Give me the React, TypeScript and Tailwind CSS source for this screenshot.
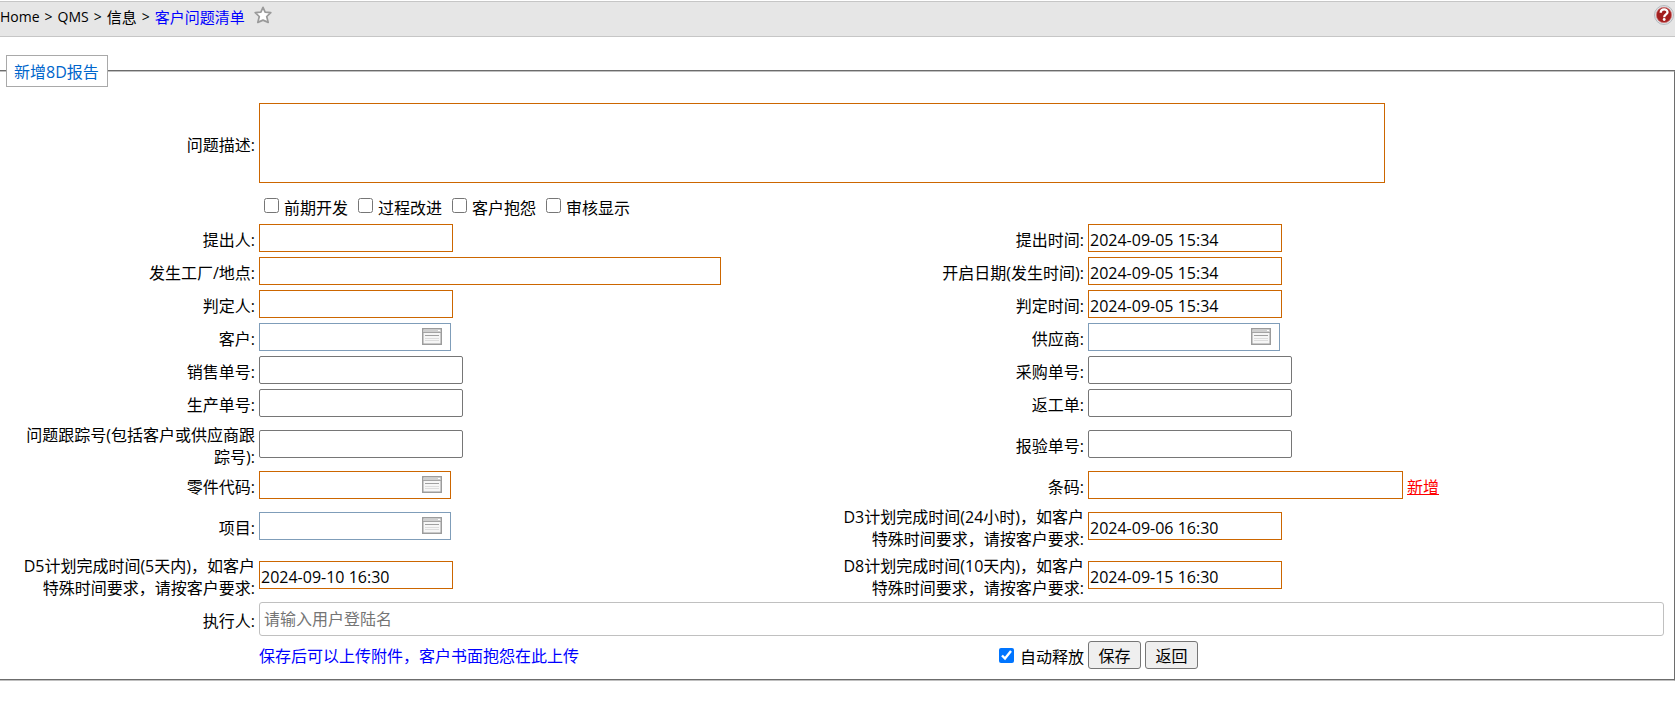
import { useState } from "react";
import type { ReactNode } from "react";
import clsx from "clsx";

type Variant = "required" | "lookup" | "requiredLookup" | "plain";

function Label({ htmlFor, children }: { htmlFor: string; children: ReactNode }) {
  return (
    <label htmlFor={htmlFor} className="-mb-0.5 self-center pt-0.5 text-right">
      {children}
    </label>
  );
}

function WindowIcon() {
  return (
    <svg width="20" height="17" viewBox="0 0 20 17" aria-hidden="true">
      <rect x="0.75" y="0.75" width="18.500" height="15.500" fill="#f6f6f6" stroke="#9c9c9c" strokeWidth="1.500" />
      <rect x="1.500" y="1.500" width="17" height="2.500" fill="#cfcfcf" />
      <path d="M1 4.500h18" stroke="#a4a4a4" />
      <path d="M3 7.500h14" stroke="#a0a0a0" />
      <path d="M3 10.500h14M3 12.500h14" stroke="#dcdcdc" />
      <path d="M16 2.500h2" stroke="#fff" />
    </svg>
  );
}

function TextField({
  id,
  variant = "plain",
  width,
  initial = "",
}: {
  id: string;
  variant?: Variant;
  width?: string;
  initial?: string;
}) {
  const [value, setValue] = useState(initial);
  const isLookup = variant === "lookup" || variant === "requiredLookup";

  return (
    <span className="relative flex items-center self-center">
      <input
        id={id}
        type="text"
        value={value}
        onChange={(e) => setValue(e.target.value)}
        className={clsx(
          "h-7 border bg-white px-px pt-1 outline-none",
          variant === "required" && "border-[#cc6600]",
          variant === "requiredLookup" && "border-[#cc6600]",
          variant === "lookup" && "border-[#7f9db9]",
          variant === "plain" && "rounded-[2px] border-[#767676]",
          width ?? (isLookup ? "w-48" : variant === "plain" ? "w-[204px]" : "w-[194px]")
        )}
      />
      {isLookup && (
        <button type="button" aria-label="选择" className="absolute top-[5px] left-[163px]">
          <WindowIcon />
        </button>
      )}
    </span>
  );
}

function Star() {
  return (
    <svg width="18" height="18" viewBox="0 0 18 18" aria-hidden="true">
      <path
        d="M9 1.300l2.100 4.900 5.700.4-4.100 3.900 1.500 5.900L9 14.100l-5.200 2.300 1.500-5.900L1.200 6.600l5.700-.4z"
        fill="#fff"
        stroke="#9a9a9a"
        strokeWidth="1.700"
        strokeLinejoin="round"
      />
    </svg>
  );
}

function HelpIcon() {
  return (
    <svg width="20" height="20" viewBox="0 0 20 20" aria-hidden="true">
      <circle cx="10" cy="10" r="9.500" fill="#dfe3e6" stroke="#b4b9be" />
      <circle cx="10" cy="10" r="7.700" fill="#a32020" stroke="#d88080" strokeWidth="0.600" />
      <path d="M6.700 7.800c0-4.400 6.800-4.300 6.800-.6 0 2.300-3.300 2.200-3.300 5" fill="none" stroke="#fff" strokeWidth="2.300" />
      <circle cx="10.200" cy="14.500" r="1.400" fill="#fff" />
    </svg>
  );
}

const categories = ["前期开发", "过程改进", "客户抱怨", "审核显示"];

export default function App() {
  const [autoRelease, setAutoRelease] = useState(true);

  return (
    <div className="min-h-screen bg-white font-['Open_Sans','Noto_Sans_CJK_SC',sans-serif] text-[16px] leading-[22px] text-black">
      <header className="mt-px flex h-9 items-start justify-between border-y border-[#c6c6c6] bg-[#e6e6e6]">
        <nav className="flex items-center gap-[5px] pt-1 text-[14px]">
          <a href="#home">Home</a>
          <span>&gt;</span>
          <a href="#qms">QMS</a>
          <span>&gt;</span>
          <a href="#info" className="text-[15px]">信息</a>
          <span>&gt;</span>
          <a href="#list" className="text-[15px] text-[#0000ff]">客户问题清单</a>
          <button type="button" aria-label="收藏" className="ml-1 self-start">
            <Star />
          </button>
        </nav>
        <button type="button" aria-label="帮助" className="pt-[3px] pr-px">
          <HelpIcon />
        </button>
      </header>

      <form onSubmit={(e) => e.preventDefault()} className="pt-[18px]">
        <fieldset className="border-y-2 border-r border-y-[#c0c0c0] border-r-[#6d6d6d] pb-2.5 [border-bottom-style:groove] [border-top-style:groove]">
          <legend className="ml-1.5 border border-[#a9a9a9] pt-[5px] pr-2 pb-[3px] pl-[7px] text-[#0066cc]">新增8D报告</legend>

          <div className="grid grid-cols-[242px_minmax(0,1fr)_245px_minmax(0,1fr)] gap-x-1 gap-y-[5px] pt-4 pr-2.5 pl-[13px]">
            <Label htmlFor="description">问题描述:</Label>
            <textarea
              id="description"
              className="col-span-3 block h-20 w-[1126px] max-w-full resize-none border border-[#cc6600] px-px outline-none"
            />

            <div className="col-span-3 col-start-2 flex h-[31px] items-center gap-2.5 pt-[3px] pl-[5px]">
              {categories.map((name) => (
                <label key={name} className="flex items-center gap-[5px]">
                  <input type="checkbox" className="size-[15px]" />
                  <span className="pt-1.5">{name}</span>
                </label>
              ))}
            </div>

            <Label htmlFor="raisedBy">提出人:</Label>
            <TextField id="raisedBy" variant="required" />
            <Label htmlFor="raisedAt">提出时间:</Label>
            <TextField id="raisedAt" variant="required" initial="2024-09-05 15:34" />

            <Label htmlFor="plant">发生工厂/地点:</Label>
            <TextField id="plant" variant="required" width="w-[462px]" />
            <Label htmlFor="openedAt">开启日期(发生时间):</Label>
            <TextField id="openedAt" variant="required" initial="2024-09-05 15:34" />

            <Label htmlFor="judgedBy">判定人:</Label>
            <TextField id="judgedBy" variant="required" />
            <Label htmlFor="judgedAt">判定时间:</Label>
            <TextField id="judgedAt" variant="required" initial="2024-09-05 15:34" />

            <Label htmlFor="customer">客户:</Label>
            <TextField id="customer" variant="lookup" />
            <Label htmlFor="supplier">供应商:</Label>
            <TextField id="supplier" variant="lookup" />

            <Label htmlFor="salesNo">销售单号:</Label>
            <TextField id="salesNo" />
            <Label htmlFor="purchaseNo">采购单号:</Label>
            <TextField id="purchaseNo" />

            <Label htmlFor="productionNo">生产单号:</Label>
            <TextField id="productionNo" />
            <Label htmlFor="reworkNo">返工单:</Label>
            <TextField id="reworkNo" />

            <Label htmlFor="trackingNo">问题跟踪号(包括客户或供应商跟踪号):</Label>
            <TextField id="trackingNo" />
            <Label htmlFor="inspectionNo">报验单号:</Label>
            <TextField id="inspectionNo" />

            <Label htmlFor="partCode">零件代码:</Label>
            <TextField id="partCode" variant="requiredLookup" />
            <Label htmlFor="barcode">条码:</Label>
            <div className="flex h-7 items-center gap-1">
              <TextField id="barcode" variant="required" width="w-[315px]" />
              <a href="#add" className="pt-1 text-[#ff0000] underline">新增</a>
            </div>

            <Label htmlFor="project">项目:</Label>
            <TextField id="project" variant="lookup" />
            <Label htmlFor="d3">D3计划完成时间(24小时)，如客户特殊时间要求，请按客户要求:</Label>
            <TextField id="d3" variant="required" initial="2024-09-06 16:30" />

            <Label htmlFor="d5">D5计划完成时间(5天内)，如客户特殊时间要求，请按客户要求:</Label>
            <TextField id="d5" variant="required" initial="2024-09-10 16:30" />
            <Label htmlFor="d8">D8计划完成时间(10天内)，如客户特殊时间要求，请按客户要求:</Label>
            <TextField id="d8" variant="required" initial="2024-09-15 16:30" />

            <Label htmlFor="executor">执行人:</Label>
            <input
              id="executor"
              type="text"
              placeholder="请输入用户登陆名"
              className="col-span-3 h-[34px] w-full rounded-[3px] border border-[#c0c0c0] px-1 outline-none placeholder:text-[#757575]"
            />

            <p className="col-start-2 self-center pt-0.5 text-[#0000ff]">保存后可以上传附件，客户书面抱怨在此上传</p>
            <label className="flex items-center justify-end gap-1.5">
              <input
                type="checkbox"
                checked={autoRelease}
                onChange={(e) => setAutoRelease(e.target.checked)}
                className="size-[15px]"
              />
              <span className="pt-1">自动释放</span>
            </label>
            <div className="flex items-center gap-1">
              <button type="submit" className="h-7 w-[53px] rounded-[3px] border border-[#767676] bg-[#efefef] pt-0.5">
                保存
              </button>
              <button type="button" className="h-7 w-[53px] rounded-[3px] border border-[#767676] bg-[#efefef] pt-0.5">
                返回
              </button>
            </div>
          </div>
        </fieldset>
      </form>
    </div>
  );
}
